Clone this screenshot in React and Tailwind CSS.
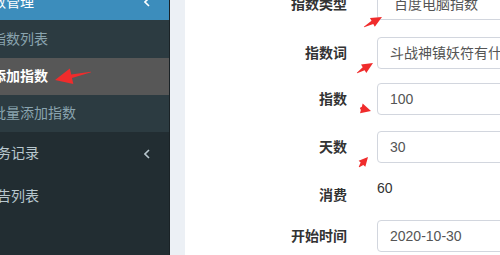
import React from "react";

const arrow = (tail, tip, headLen, headW, tailW = 2) => {
  const dx = tip[0] - tail[0];
  const dy = tip[1] - tail[1];
  const len = Math.hypot(dx, dy);
  const ux = dx / len;
  const uy = dy / len;
  const px = -uy;
  const py = ux;
  const bx = tip[0] - ux * headLen;
  const by = tip[1] - uy * headLen;
  const pts = [
    tip,
    [bx + px * headW * 0.5, by + py * headW * 0.5],
    [bx + px * tailW * 0.6, by + py * tailW * 0.6],
    [tail[0] + px * 0.3, tail[1] + py * 0.3],
    [tail[0] - px * 0.3, tail[1] - py * 0.3],
    [bx - px * tailW * 0.6, by - py * tailW * 0.6],
    [bx - px * headW * 0.5, by - py * headW * 0.5],
  ];
  return pts.map((p) => p.join(",")).join(" ");
};

const Chevron = () => (
  <svg width="6" height="10" viewBox="0 0 6 10" className="shrink-0">
    <polyline points="5,1 1,5 5,9" fill="none" stroke="currentColor" strokeWidth="1.6" />
  </svg>
);

const SideItem = ({ children }) => (
  <div className="h-[43px] flex items-center justify-between pl-[13px] pr-[19px] text-[#b8c7ce] text-[14px]">
    <span>{children}</span>
  </div>
);

const Row = ({ label, children, className = "" }) => (
  <div className={`flex items-center ${className}`}>
    <div className="w-[162px] shrink-0 text-right text-[14px] font-bold text-[#333]">{label}</div>
    <div className="ml-[30px] w-[320px] shrink-0">{children}</div>
  </div>
);

const Input = ({ value, pad = "pl-[12px]" }) => (
  <div className={`h-[32px] w-[320px] border border-[#d2d6de] rounded-[4px] bg-white flex items-center ${pad} text-[14px] text-[#555] whitespace-nowrap overflow-hidden`}>
    {value}
  </div>
);

export default function App() {
  return (
    <div className="relative w-[500px] h-[255px] overflow-hidden flex bg-white font-[family-name:'Helvetica_Neue',Helvetica,Arial,'Liberation_Sans','Noto_Sans_CJK_SC',sans-serif]">
      <aside className="w-[170px] shrink-0 bg-[#222d32] overflow-hidden border-r border-[#1a2226]">
        <div className="-ml-[30px] -mt-[22px]">
          <div className="h-[42px] bg-[#3c8dbc] flex items-center justify-between pt-[6px] pl-[8px] pr-[19px] text-white text-[14px]">
            <span>指数管理</span>
            <Chevron />
          </div>
          <div className="bg-[#2c3b41] text-[14px]">
            <div className="h-[38px] flex items-center pl-[22px] text-[#8aa4af]">指数列表</div>
            <div className="h-[37px] flex items-center pl-[22px] bg-[#575757] text-white font-bold">添加指数</div>
            <div className="h-[37px] flex items-center pl-[22px] text-[#8aa4af]">批量添加指数</div>
          </div>
          <div className="h-[43px] flex items-center justify-between pl-[13px] pr-[19px] text-[#b8c7ce] text-[14px]">
            <span>业务记录</span>
            <Chevron />
          </div>
          <SideItem>广告列表</SideItem>
        </div>
      </aside>
      <div className="w-[15px] shrink-0 bg-[#ecf0f5]" />
      <main className="flex-1 bg-white overflow-hidden">
        <div className="-mt-[12px] flex flex-col">
          <Row label="指数类型">
            <Input value="百度电脑指数" pad="pl-[16px]" />
          </Row>
          <Row label="指数词" className="mt-[17px]">
            <Input value="斗战神镇妖符有什么用" />
          </Row>
          <Row label="指数" className="mt-[14px]">
            <Input value="100" />
          </Row>
          <Row label="天数" className="mt-[16px]">
            <Input value="30" />
          </Row>
          <div className="flex mt-[15px] h-[30px]">
            <div className="w-[162px] shrink-0 text-right text-[14px] font-bold text-[#333] self-end pb-[2px]">消费</div>
            <div className="ml-[30px] text-[14px] text-[#333] leading-[20px]">60</div>
          </div>
          <Row label="开始时间" className="mt-[12px]">
            <Input value="2020-10-30" />
          </Row>
        </div>
      </main>
      <svg className="absolute inset-0 pointer-events-none" width="500" height="255">
        <g fill="#f02c2c">
          <polygon points={arrow([91, 72], [55, 80], 17, 16, 3)} />
          <polygon points={arrow([364, 27], [382, 17], 11, 10, 3)} />
          <polygon points={arrow([357, 73], [373, 63], 11, 10, 3)} />
          <polygon points={arrow([360, 108], [371, 111], 10, 10, 3)} />
          <polygon points={arrow([359, 167], [368, 157], 9, 9, 3)} />
        </g>
      </svg>
    </div>
  );
}
